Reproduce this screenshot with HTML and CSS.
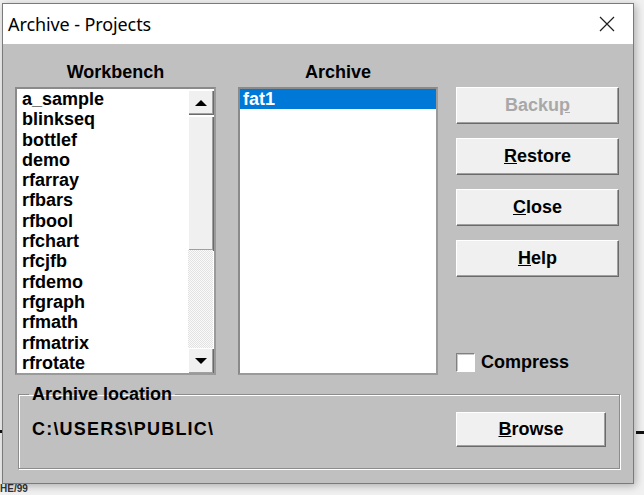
FILE: index.html
```html
<!DOCTYPE html>
<html lang="en">
<head>
  <meta charset="UTF-8">
  <title>Archive - Projects</title>
  <link rel="stylesheet" href="styles.css">
</head>
<body>

  <div class="window">
    <div class="titlebar">
      <span class="title">Archive - Projects</span>
      <svg class="close" width="16" height="16" viewBox="0 0 16 16">
        <path d="M1 1L15 15M15 1L1 15" stroke="#1e1e1e" stroke-width="1.2" fill="none"/>
      </svg>
    </div>

    <div class="client">
      <div class="panes">
        <div class="col col-list">
          <div class="col-head">Workbench</div>
          <div class="listbox">
            <div class="items">
              <div class="item">a_sample</div>
              <div class="item">blinkseq</div>
              <div class="item">bottlef</div>
              <div class="item">demo</div>
              <div class="item">rfarray</div>
              <div class="item">rfbars</div>
              <div class="item">rfbool</div>
              <div class="item">rfchart</div>
              <div class="item">rfcjfb</div>
              <div class="item">rfdemo</div>
              <div class="item">rfgraph</div>
              <div class="item">rfmath</div>
              <div class="item">rfmatrix</div>
              <div class="item">rfrotate</div>
            </div>
            <div class="scrollbar">
              <div class="sb-btn"><span class="arrow-up"></span></div>
              <div class="sb-thumb"></div>
              <div class="sb-track"></div>
              <div class="sb-btn sb-down"><span class="arrow-down"></span></div>
            </div>
          </div>
        </div>

        <div class="col col-archive">
          <div class="col-head">Archive</div>
          <div class="listbox">
            <div class="items">
              <div class="item selected">fat1</div>
            </div>
          </div>
        </div>

        <div class="col col-actions">
          <div class="col-head"></div>
          <button class="btn" disabled>Backu<u>p</u></button>
          <button class="btn"><u>R</u>estore</button>
          <button class="btn"><u>C</u>lose</button>
          <button class="btn"><u>H</u>elp</button>
          <label class="check">
            <span class="box"></span>
            Compress
          </label>
        </div>
      </div>

      <fieldset class="location">
        <legend>Archive location</legend>
        <span class="path">C:\USERS\PUBLIC\</span>
        <button class="btn browse"><u>B</u>rowse</button>
      </fieldset>
    </div>
  </div>

  <div class="behind dash-right"></div>
  <div class="behind dash-left"></div>
  <div class="behind under-text">HE/99</div>

</body>
</html>
```

FILE: styles.css
```css
body {
  margin: 0;
  background-color: #f1f1f1;
  font-family: "Liberation Sans", Arial, sans-serif;
  position: relative;
  height: 495px;
  overflow: hidden;
}
.window {
  box-sizing: border-box;
  width: 632px;
  height: 481px;
  margin: 3px 0 0 2px;
  border: 1px solid #7a7a7a;
  background-color: #c0c0c0;
  box-shadow: 2px 2px 8px rgba(0, 0, 0, 0.28);
  position: relative;
  z-index: 1;
}
.titlebar {
  height: 40px;
  background-color: #fff;
  display: flex;
  align-items: center;
  justify-content: space-between;
  padding: 0 18px 0 5px;
}
.title {
  font-family: "Noto Sans", sans-serif;
  font-size: 18px;
  color: #000;
  letter-spacing: -0.1px;
}
.client {
  padding: 18px 0 0 12px;
}
.panes {
  display: flex;
}
.col {
  display: flex;
  flex-direction: column;
}
.col-list {
  width: 201px;
  margin-right: 22px;
}
.col-archive {
  width: 200px;
  margin-right: 18px;
}
.col-actions {
  width: 162px;
  height: 313px;
}
.col-head {
  height: 20px;
  line-height: 20px;
  margin-bottom: 5px;
  text-align: center;
  font-weight: bold;
  font-size: 18px;
}
.listbox {
  box-sizing: border-box;
  height: 288px;
  background-color: #fff;
  border: 2px solid #8a8a8a;
  border-right-color: #9a9a9a;
  border-bottom-color: #9a9a9a;
  display: flex;
  overflow: hidden;
}
.items {
  flex: 1;
  overflow: hidden;
}
.item {
  height: 20.3px;
  line-height: 20.3px;
  padding-left: 5px;
  font-weight: bold;
  font-size: 18px;
  color: #000;
  white-space: nowrap;
}
.item.selected {
  background-color: #0078d7;
  color: #fff;
  padding-left: 3px;
}
.scrollbar {
  width: 25px;
  margin: 1px 1px 0 0;
  display: flex;
  flex-direction: column;
}
.sb-btn {
  box-sizing: border-box;
  height: 24px;
  background-color: #f0f0f0;
  border-top: 1px solid #fff;
  border-left: 1px solid #fff;
  box-shadow: inset -1px -1px 0 #a0a0a0, 1px 1px 0 #6a6a6a;
  display: flex;
  align-items: center;
  justify-content: center;
}
.sb-down {
  height: 25px;
}
.arrow-up {
  border-left: 6px solid transparent;
  border-right: 6px solid transparent;
  border-bottom: 6px solid #000;
}
.arrow-down {
  border-left: 6px solid transparent;
  border-right: 6px solid transparent;
  border-top: 6px solid #000;
}
.sb-thumb {
  box-sizing: border-box;
  height: 134px;
  margin-top: 2px;
  background-color: #f0f0f0;
  border-top: 1px solid #fff;
  border-left: 1px solid #fff;
  box-shadow: inset -1px -1px 0 #a0a0a0, 1px 1px 0 #6a6a6a;
}
.sb-track {
  flex: 1;
  background: repeating-conic-gradient(#fafafa 0 25%, #e2e2e2 0 50%) 0 0 / 2px 2px;
}
.btn {
  box-sizing: border-box;
  width: 162px;
  height: 36px;
  margin-bottom: 15px;
  padding: 0;
  background-color: #f0f0f0;
  border: none;
  border-top: 1px solid #fff;
  border-left: 1px solid #fff;
  box-shadow: inset -1px -1px 0 #a0a0a0, 1px 1px 0 #6a6a6a;
  font-family: "Liberation Sans", Arial, sans-serif;
  font-weight: bold;
  font-size: 18px;
  color: #000;
}
.btn:disabled {
  color: #a8a8a8;
}
.check {
  margin-top: auto;
  margin-bottom: 2px;
  display: flex;
  align-items: center;
  gap: 6px;
  font-weight: bold;
  font-size: 18px;
}
.box {
  box-sizing: border-box;
  width: 19px;
  height: 19px;
  background-color: #fff;
  border: 1px solid;
  border-color: #808080 #fff #fff #808080;
  box-shadow: inset 1px 1px 0 #c8c8c8;
}
.location {
  box-sizing: border-box;
  width: 602px;
  margin: 10px 0 0 3px;
  padding: 9px 14px 22px 13px;
  border: 1px solid #8c8c8c;
  box-shadow: 1px 1px 0 #fff, inset 1px 1px 0 #fff;
  display: flex;
  align-items: center;
  justify-content: space-between;
}
.location legend {
  padding: 0 3px;
  margin-left: -3px;
  line-height: 18px;
  font-weight: bold;
  font-size: 18px;
}
.path {
  font-weight: bold;
  font-size: 18px;
  letter-spacing: 1.2px;
}
.browse {
  width: 149px;
  height: 34px;
  margin: 0;
}
.behind {
  position: absolute;
  background-color: #111;
}
.dash-right {
  left: 636px;
  top: 431px;
  width: 8px;
  height: 3px;
}
.dash-left {
  left: 0;
  top: 430px;
  width: 3px;
  height: 3px;
}
.under-text {
  left: 0;
  top: 483px;
  background: none;
  color: #333;
  font-size: 10px;
  font-weight: bold;
  line-height: 12px;
}
```
